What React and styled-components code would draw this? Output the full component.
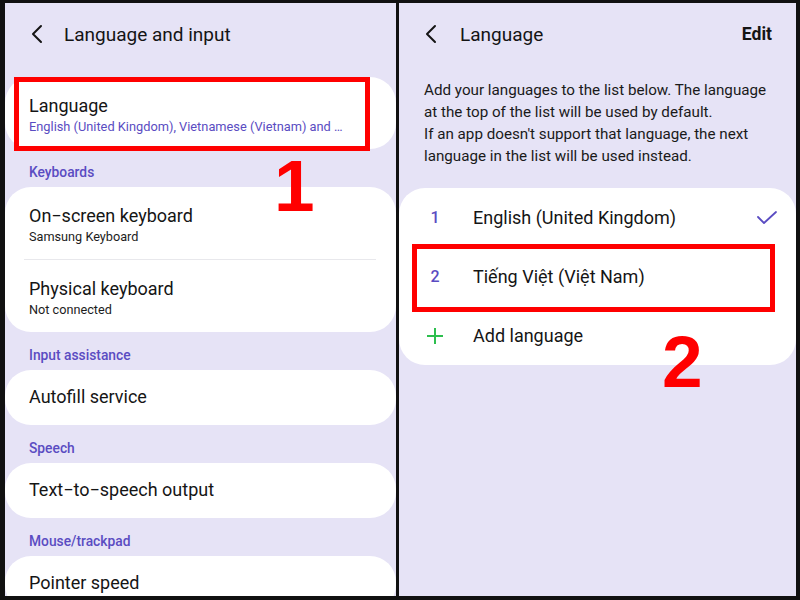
import React from "react";
import styled, { createGlobalStyle } from "styled-components";

const Global = createGlobalStyle`
  html, body { margin: 0; padding: 0; }
  body { font-family: Roboto, "Noto Sans", sans-serif; }
`;

const Frame = styled.div`
  width: 800px;
  height: 600px;
  box-sizing: border-box;
  background: #111;
  padding: 3px 4px 4px 5px;
  display: flex;
  gap: 3px;
`;

const Panel = styled.div`
  position: relative;
  width: ${(p) => p.$w}px;
  flex: none;
  background: #e6e3f6;
  overflow: hidden;
  display: flex;
  flex-direction: column;
`;

const Header = styled.div`
  height: 62px;
  display: flex;
  align-items: center;
  padding-left: ${(p) => p.$pl}px;
  padding-right: 24px;
  flex: none;
`;

const Back = styled.svg`
  width: 14px;
  height: 20px;
  margin-right: ${(p) => p.$gap}px;
  flex: none;
`;

const Title = styled.div`
  font-size: 19px;
  color: #141414;
  flex: 1;
`;

const Edit = styled.div`
  font-size: 17.6px;
  font-weight: 700;
  color: #141414;
`;

const Card = styled.div`
  background: #fff;
  border-radius: 26px;
  margin: ${(p) => p.$mt || 0}px 0 0;
  padding: ${(p) => p.$pad || "0"};
  flex: none;
`;

const Item = styled.div`
  padding: ${(p) => (p.$single ? "16px 24px 17px" : "18px 24px 13px")};
`;

const ItemTitle = styled.div`
  font-size: 18px;
  line-height: 22px;
  color: #151515;
`;

const ItemSub = styled.div`
  font-size: ${(p) => (p.$accent ? 12.8 : 12.7)}px;
  line-height: 18px;
  margin-top: 1px;
  color: ${(p) => (p.$accent ? "#5a4cc2" : "#1c1c1c")};
  white-space: nowrap;
`;

const Divider = styled.div`
  height: 1px;
  background: #e8e8ec;
  margin: 0 20px 0 19px;
`;

const Category = styled.div`
  padding: 15px 24px 6px;
  font-size: 13.8px;
  line-height: 17px;
  font-weight: 500;
  color: #5a4cc2;
`;

const Description = styled.div`
  padding: 14px 20px 21px 25px;
  font-size: 15.2px;
  line-height: 22px;
  color: #1a1a1a;
`;

const LangRow = styled.div`
  height: 59px;
  display: flex;
  align-items: center;
  padding: 0 18px 0 24px;
`;

const Num = styled.div`
  width: 24px;
  text-align: center;
  font-size: 16px;
  font-weight: 500;
  color: #5a4cc2;
  margin-right: 26px;
`;

const IconSlot = styled.div`
  width: 24px;
  height: 24px;
  display: flex;
  align-items: center;
  justify-content: center;
  margin-right: 26px;
`;

const LangName = styled.div`
  flex: 1;
  font-size: 18px;
  color: #151515;
`;

const Highlight = styled.div`
  position: absolute;
  left: ${(p) => p.$x}px;
  top: ${(p) => p.$y}px;
  width: ${(p) => p.$w}px;
  height: ${(p) => p.$h}px;
  box-sizing: border-box;
  border: 5px solid #ff0000;
  pointer-events: none;
`;

const StepNumber = styled.div`
  position: absolute;
  left: ${(p) => p.$x}px;
  top: ${(p) => p.$y}px;
  font-family: "Liberation Sans", Arial, sans-serif;
  font-weight: 700;
  font-size: 73px;
  line-height: 1;
  color: #ff0000;
`;

const Chevron = ({ gap }) => (
  <Back $gap={gap} viewBox="0 0 14 20">
    <polyline points="11,2 3,10 11,18" fill="none" stroke="#141414" strokeWidth="2" strokeLinecap="round" strokeLinejoin="round" />
  </Back>
);

export default function App() {
  return (
    <>
      <Global />
      <Frame>
        <Panel $w={391}>
          <Header $pl={25}>
            <Chevron gap={20} />
            <Title>Language and input</Title>
          </Header>
          <Card $mt={12}>
            <Item>
              <ItemTitle>Language</ItemTitle>
              <ItemSub $accent>English (United Kingdom), Vietnamese (Vietnam) and …</ItemSub>
            </Item>
          </Card>
          <Category>Keyboards</Category>
          <Card>
            <Item>
              <ItemTitle>On−screen keyboard</ItemTitle>
              <ItemSub>Samsung Keyboard</ItemSub>
            </Item>
            <Divider />
            <Item>
              <ItemTitle>Physical keyboard</ItemTitle>
              <ItemSub>Not connected</ItemSub>
            </Item>
          </Card>
          <Category>Input assistance</Category>
          <Card>
            <Item $single>
              <ItemTitle>Autofill service</ItemTitle>
            </Item>
          </Card>
          <Category>Speech</Category>
          <Card>
            <Item $single>
              <ItemTitle>Text−to−speech output</ItemTitle>
            </Item>
          </Card>
          <Category>Mouse/trackpad</Category>
          <Card>
            <Item $single>
              <ItemTitle>Pointer speed</ItemTitle>
            </Item>
          </Card>
          <Highlight $x={9} $y={74} $w={356} $h={74} />
          <StepNumber $x={269} $y={146}>1</StepNumber>
        </Panel>
        <Panel $w={397}>
          <Header $pl={25}>
            <Chevron gap={22} />
            <Title>Language</Title>
            <Edit>Edit</Edit>
          </Header>
          <Description>
            Add your languages to the list below. The language at the top of the list will be used by default.
            <br />
            If an app doesn't support that language, the next language in the list will be used instead.
          </Description>
          <Card>
            <LangRow>
              <Num>1</Num>
              <LangName>English (United Kingdom)</LangName>
              <svg width="22" height="16" viewBox="0 0 22 16">
                <polyline points="2,7 8,13 20,2" fill="none" stroke="#5a4cc2" strokeWidth="1.8" strokeLinecap="round" strokeLinejoin="round" />
              </svg>
            </LangRow>
            <LangRow>
              <Num>2</Num>
              <LangName>Tiếng Việt (Việt Nam)</LangName>
            </LangRow>
            <LangRow>
              <IconSlot>
                <svg width="18" height="18" viewBox="0 0 18 18">
                  <path d="M9 1v16M1 9h16" stroke="#2dbf4e" strokeWidth="2" fill="none" />
                </svg>
              </IconSlot>
              <LangName>Add language</LangName>
            </LangRow>
          </Card>
          <Highlight $x={13} $y={241} $w={363} $h={68} />
          <StepNumber $x={263} $y={322}>2</StepNumber>
        </Panel>
      </Frame>
    </>
  );
}
